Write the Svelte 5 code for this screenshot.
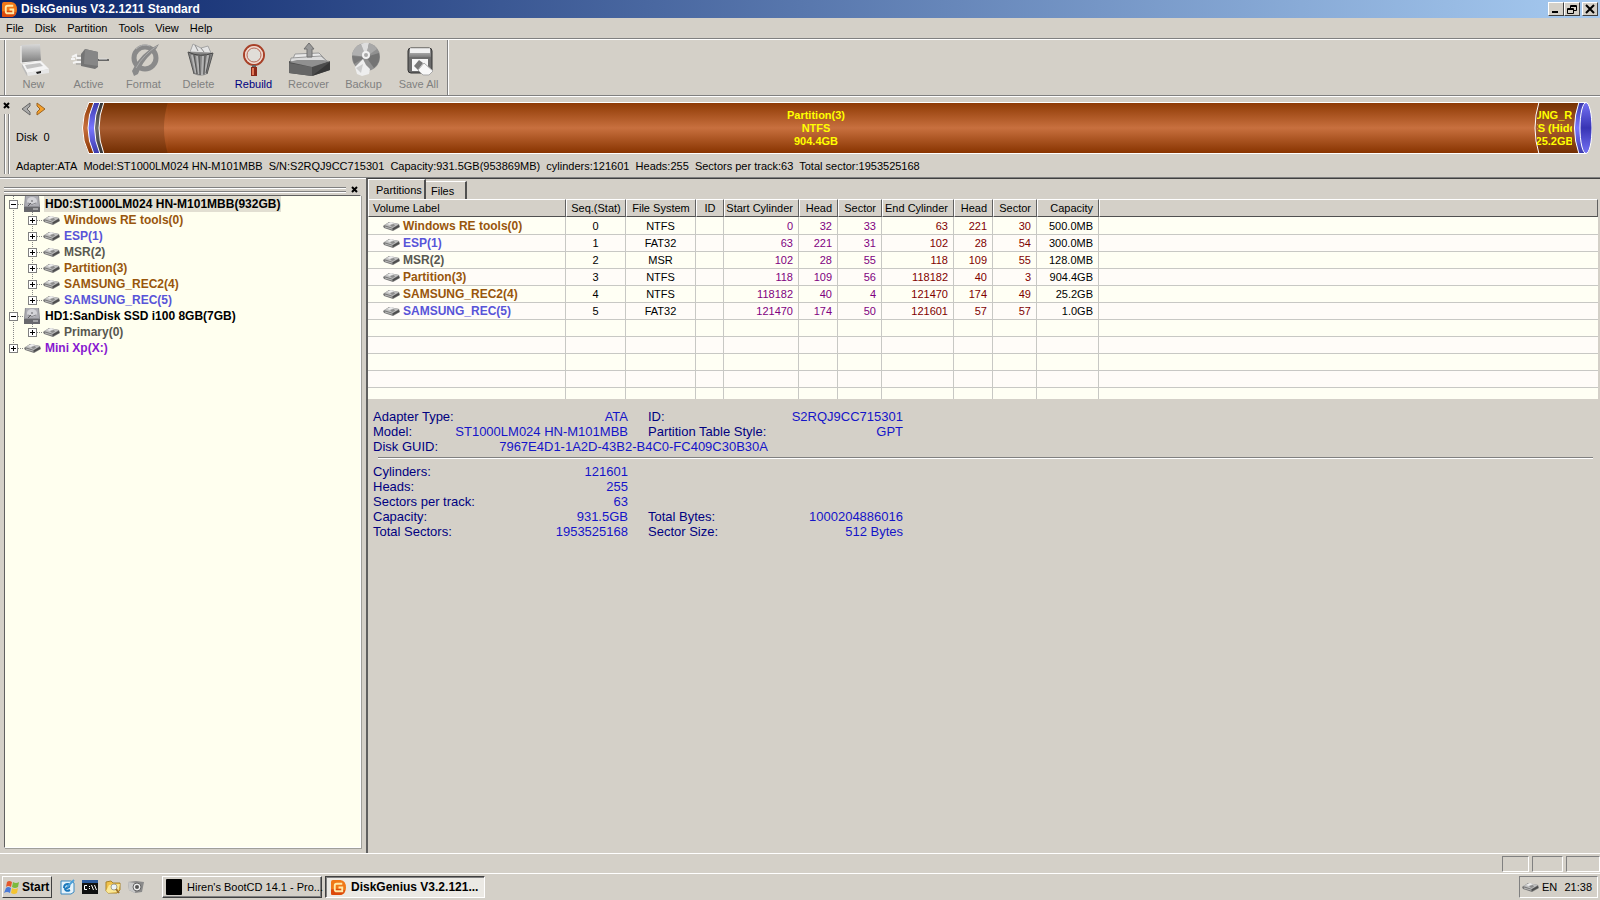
<script lang="ts">
  const menu = ['File', 'Disk', 'Partition', 'Tools', 'View', 'Help'];

  const tools = [
    { id: 'new', label: 'New' },
    { id: 'active', label: 'Active' },
    { id: 'format', label: 'Format' },
    { id: 'delete', label: 'Delete' },
    { id: 'rebuild', label: 'Rebuild' },
    { id: 'recover', label: 'Recover' },
    { id: 'backup', label: 'Backup' },
    { id: 'save', label: 'Save All' }
  ];

  const tree = [
    {
      name: 'HD0:ST1000LM024 HN-M101MBB(932GB)',
      kind: 'black',
      selected: true,
      children: [
        { name: 'Windows RE tools(0)', kind: 'ntfs' },
        { name: 'ESP(1)', kind: 'fat' },
        { name: 'MSR(2)', kind: 'msr' },
        { name: 'Partition(3)', kind: 'ntfs' },
        { name: 'SAMSUNG_REC2(4)', kind: 'ntfs' },
        { name: 'SAMSUNG_REC(5)', kind: 'fat' }
      ]
    },
    { name: 'HD1:SanDisk SSD i100 8GB(7GB)', kind: 'black', children: [{ name: 'Primary(0)', kind: 'msr' }] },
    { name: 'Mini Xp(X:)', kind: 'xp', children: [] }
  ];

  const headers = ['Volume Label', 'Seq.(Stat)', 'File System', 'ID', 'Start Cylinder', 'Head', 'Sector', 'End Cylinder', 'Head', 'Sector', 'Capacity'];

  const rows = [
    { kind: 'ntfs', cells: ['Windows RE tools(0)', '0', 'NTFS', '', '0', '32', '33', '63', '221', '30', '500.0MB'] },
    { kind: 'fat', cells: ['ESP(1)', '1', 'FAT32', '', '63', '221', '31', '102', '28', '54', '300.0MB'] },
    { kind: 'msr', cells: ['MSR(2)', '2', 'MSR', '', '102', '28', '55', '118', '109', '55', '128.0MB'] },
    { kind: 'ntfs', cells: ['Partition(3)', '3', 'NTFS', '', '118', '109', '56', '118182', '40', '3', '904.4GB'] },
    { kind: 'ntfs', cells: ['SAMSUNG_REC2(4)', '4', 'NTFS', '', '118182', '40', '4', '121470', '174', '49', '25.2GB'] },
    { kind: 'fat', cells: ['SAMSUNG_REC(5)', '5', 'FAT32', '', '121470', '174', '50', '121601', '57', '57', '1.0GB'] }
  ];

  const cellClass = (i: number) => (i === 0 ? 'label' : i < 4 ? 'mid' : i < 7 ? 'from' : i < 10 ? 'to' : 'cap');

  const idInfo = [
    [['Adapter Type:', 'ATA'], ['ID:', 'S2RQJ9CC715301']],
    [['Model:', 'ST1000LM024 HN-M101MBB'], ['Partition Table Style:', 'GPT']],
    [['Disk GUID:', '7967E4D1-1A2D-43B2-B4C0-FC409C30B30A']]
  ];

  const sizeInfo = [
    [['Cylinders:', '121601']],
    [['Heads:', '255']],
    [['Sectors per track:', '63']],
    [['Capacity:', '931.5GB'], ['Total Bytes:', '1000204886016']],
    [['Total Sectors:', '1953525168'], ['Sector Size:', '512 Bytes']]
  ];
</script>

{#snippet volume()}
  <svg class="vol" width="17" height="10" viewBox="0 0 17 10">
    <path d="M0 5 6 1 16 3 17 6 10 10 1 7Z" fill="#777" />
    <path d="M1 4 7 1 16 3 10 7Z" fill="#c0c0c0" />
    <path d="M4 3 8 1 11 2 7 4Z" fill="#eee" />
    <path d="M7 4 11 3 12 5 9 6Z" fill="#8c8c8c" />
    <path d="M10 7 16 4 16 6 10 9Z" fill="#4c4c4c" />
    <path d="M2 6 9 8" stroke="#bbb" />
  </svg>
{/snippet}

{#snippet drive()}
  <svg class="drive" width="16" height="16" viewBox="0 0 16 16">
    <path d="M1 0H15L16 10V16H0V10Z" fill="#8f8f94" />
    <path d="M2 0H14L15 10H1Z" fill="#acacb2" />
    <ellipse cx="8" cy="5" rx="5" ry="4" fill="#d4d4d8" />
    <path d="M4 7Q8 10 12 7" fill="none" stroke="#84848a" />
    <circle cx="8" cy="5" r="1" fill="#88888c" />
    <path d="M4 10 7 7" stroke="#5c5c60" />
    <path d="M0 11H16V16H0Z" fill="#68686c" />
    <path d="M9 13H14" stroke="#ddd" />
  </svg>
{/snippet}

{#snippet logo(size: number)}
  <svg width={size} height={size} viewBox="0 0 16 16">
    <path d="M2 0H10Q16 1 16 8T10 16H2Q0 16 0 14V2Q0 0 2 0Z" fill="#f07818" />
    <path d="M0 10Q8 8 15 11Q14 16 9 16H2Q0 16 0 14Z" fill="#dd4a0c" />
    <path d="M12 4H6Q4 4 4 6V10Q4 12 6 12H12V8H8" fill="none" stroke="#ffe9a8" stroke-width="2" />
  </svg>
{/snippet}

<div class="app">
  <header class="title">
    {@render logo(15)}
    <h1>DiskGenius V3.2.1211 Standard</h1>
    <div class="winbtns">
      <button aria-label="Minimize"><svg width="12" height="10"><path d="M2 8H8" stroke="#000" stroke-width="2" /></svg></button>
      <button aria-label="Restore">
        <svg width="12" height="10"><path d="M4.5 4V1.5H10.5V6.5H8M4 2.5H10M1.5 4.5H7.5V9.5H1.5ZM1 5.5H7" fill="none" stroke="#000" /></svg>
      </button>
      <button class="close" aria-label="Close"><svg width="12" height="10"><path d="M2 1 10 9M10 1 2 9" stroke="#000" stroke-width="2" /></svg></button>
    </div>
  </header>

  <nav class="menu">
    {#each menu as item}
      <button>{item}</button>
    {/each}
  </nav>

  <div class="toolbar">
    <div class="band">
      {#each tools as t}
        <button class:on={t.id === 'rebuild'}>
          <svg width="44" height="34" viewBox="0 0 44 34">
            {#if t.id === 'new'}
              <path d="M9 3 28 2 29 19 10 21Z" fill="url(#shade)" />
              <path d="M9 4V21L29 19" fill="none" stroke="#f2f2f2" />
              <path d="M10 22 29 19 37 27 15 31Z" fill="#f4f4f4" />
              <path d="M13 23 28 21 31 24 15 27Z" fill="#c2c2c2" />
              <path d="M10 22 15 31V34L10 25Z" fill="#bbb" />
              <path d="M15 31 37 27V31L16 34Z" fill="#e6e6e6" />
              <path d="M24 30 29 29V31L25 32Z" fill="#222" />
            {:else if t.id === 'active'}
              <path d="M5 15 9 13 10 16 16 16M6 21 9 20 16 20M4 17H8" fill="none" stroke="#f4f4f4" stroke-width="2" />
              <path d="M10 14H16M10 18H16M9 22H16" stroke="#999" />
              <path d="M31 18H42" stroke="#666" stroke-width="2" />
              <path d="M32 17H40" stroke="#ddd" />
              <path d="M14 12 18 7 31 10V25L28 27 14 24Z" fill="#747474" />
              <path d="M18 7 31 10V24L17 22Z" fill="#868686" />
            {:else if t.id === 'format'}
              <circle cx="23" cy="16" r="11" fill="none" stroke="#8a8a8a" stroke-width="5" />
              <path d="M14 7Q20 1 28 4" fill="none" stroke="#b4b4b4" />
              <path d="M37 2Q35 7 30 11 20 20 16 32L12 34 10 29Q18 11 37 2Z" fill="#8a8a8a" />
              <path d="M35 4Q22 12 14 26" fill="none" stroke="#aaa" />
            {:else if t.id === 'delete'}
              <path d="M13 10 16 2 24 6 31 4 34 11Z" fill="#e4e4e4" stroke="#a4a4a4" />
              <path d="M18 3 21 9M24 6 27 10" stroke="#888" />
              <path d="M11 10 36 11 30 32Q24 35 17 32Z" fill="#848484" />
              <path d="M15 13 19 31M20 14 22 32M26 14 25 33M31 13 28 32" stroke="#b4b4b4" stroke-width="2" />
              <path d="M17 13 20 32M22 14 23 33M28 14 27 32M33 13 29 31" stroke="#555" />
              <path d="M11 10Q23 16 36 11" fill="none" stroke="#444" />
              <path d="M11 10 17 32M36 11 30 32" stroke="#555" />
            {:else if t.id === 'rebuild'}
              <circle cx="22" cy="13" r="10" fill="#e0ddd8" stroke="#a84028" stroke-width="2" />
              <circle cx="22" cy="13" r="8" fill="none" stroke="#f0d6cc" stroke-width="2" />
              <circle cx="22" cy="13" r="7" fill="none" stroke="#b86a58" />
              <path d="M19 25H25V34H19Z" fill="#8a2818" />
              <path d="M21 26V33" stroke="#e07858" stroke-width="2" />
              <path d="M20 24H24" stroke="#666" stroke-width="2" />
            {:else if t.id === 'recover'}
              <path d="M8 12 32 11 40 19 5 19Z" fill="#e8e8e8" stroke="#999" />
              <path d="M4 16 34 14 41 20 3 21Z" fill="#dcdcdc" stroke="#999" />
              <path d="M2 19 24 24 43 19V28L25 34 2 31Z" fill="#4c4c4c" />
              <path d="M2 21 25 25V34L2 31Z" fill="#666" />
              <path d="M2 20 10 18H36L43 19 25 25Z" fill="#909090" />
              <path d="M25 34 43 20V28Z" fill="#383838" />
              <path d="M20 15V7H17L22 1 27 7H25V15Z" fill="#999" stroke="#707070" />
            {:else if t.id === 'backup'}
              <circle cx="24" cy="15" r="14" fill="#909090" />
              <path d="M24 15 10 13A14 14 0 0 1 19 2Z" fill="#b0b0b0" />
              <path d="M24 15 19 2A14 14 0 0 1 27 1Z" fill="#dedede" />
              <path d="M24 15 27 1A14 14 0 0 1 35 7Z" fill="#a8a8a8" />
              <path d="M24 15 37 11A14 14 0 0 1 32 26Z" fill="#747474" />
              <path d="M24 15 12 22 10 14Z" fill="#787878" />
              <circle cx="24" cy="13" r="4" fill="#f2f2f2" />
              <circle cx="24" cy="13" r="2" fill="#aaa" />
              <path d="M21 17 13 25 15 32 20 34 27 32 28 27 24 23Z" fill="#eee" />
              <path d="M14 26 21 22 19 31Z" fill="#ccc" />
            {:else}
              <rect x="11" y="6" width="24" height="25" rx="3" fill="#6c6c6c" stroke="#333" />
              <path d="M13 6H33L34 15H12Z" fill="url(#shade)" />
              <path d="M13 7H33V11H13Z" fill="#f0f0f0" />
              <path d="M15 17H31V29H15Z" fill="#f6f6f6" />
              <path d="M17 24 22 18 26 21 21 28Z" fill="#777" />
              <path d="M21 28 27 21 36 29 32 33H26Z" fill="#f8f8f8" stroke="#aaa" />
            {/if}
          </svg>
          <span>{t.label}</span>
        </button>
      {/each}
    </div>
  </div>

  <section class="disk">
    <div class="side">
      <button class="x" aria-label="Close disk bar"><svg width="7" height="7"><path d="M1 1 6 6M6 1 1 6" stroke="#000" stroke-width="2" /></svg></button>
      <div class="vgrip"></div>
    </div>
    <div class="diskmain">
      <div class="diskrow">
        <div class="pick">
          <div class="arrows">
            <button aria-label="Previous disk">
              <svg width="10" height="14"><path d="M9 1V4L6 7 9 10V13L1 7Z" fill="#aaa" stroke="#666" /></svg>
            </button>
            <button aria-label="Next disk">
              <svg width="10" height="14"><path d="M1 1 9 7 1 13V10L4 7 1 4Z" fill="#f5a02c" stroke="#9a6424" /></svg>
            </button>
          </div>
          <span>Disk&nbsp; 0</span>
        </div>
        <div class="cyl">
          <svg width="86" height="52" viewBox="0 0 86 52">
            <path d="M7 0H86V52H7Q-6 26 7 0Z" fill="url(#brown)" />
            <path d="M12 0H22V52H12Q0 26 12 0Z" fill="url(#blue)" />
            <path d="M18 0H26V52H18Q7 26 18 0Z" fill="url(#grey)" />
            <path d="M22 0H86Q78 26 86 52H22Q12 26 22 0Z" fill="url(#used)" />
            <path d="M7 0Q-6 26 7 52M12 0Q0 26 12 52M18 0Q7 26 18 52M22 0Q12 26 22 52M7 0.5H86M7 51.5H86" fill="none" stroke="#fff" />
          </svg>
          <div class="part">
            <span>Partition(3)</span>
            <span>NTFS</span>
            <span>904.4GB</span>
          </div>
          <div class="tail">
            <svg width="58" height="52" viewBox="0 0 58 52">
              <path d="M0 0H46V52H0Z" fill="url(#brown)" />
              <path d="M5 0H46V52H5Q-3 26 5 0Z" fill="url(#used)" />
              <path d="M45 0H52V52H45Q36 26 45 0Z" fill="url(#blue)" />
              <ellipse cx="52" cy="26" rx="6" ry="25.5" fill="url(#cap)" stroke="#fff" />
              <path d="M5 0Q-3 26 5 52M45 0Q36 26 45 52M0 0.5H52M0 51.5H52" fill="none" stroke="#fff" />
            </svg>
            <div class="tailtext">
              <span>SAMSUNG_REC2(4)</span>
              <span>NTFS (Hidden)</span>
              <span>25.2GB</span>
            </div>
          </div>
        </div>
      </div>
      <p>Adapter:ATA&nbsp; Model:ST1000LM024 HN-M101MBB&nbsp; S/N:S2RQJ9CC715301&nbsp; Capacity:931.5GB(953869MB)&nbsp; cylinders:121601&nbsp; Heads:255&nbsp; Sectors per track:63&nbsp; Total sector:1953525168</p>
    </div>
  </section>

  <main>
    <aside>
      <div class="gripbar">
        <div class="hgrip"></div>
        <button class="x" aria-label="Close tree"><svg width="7" height="7"><path d="M1 1 6 6M6 1 1 6" stroke="#000" stroke-width="2" /></svg></button>
      </div>
      <ul class="tree">
        {#each tree as node}
          <li>
            <div class="node">
              <button class="exp" aria-label="Toggle {node.name}">
                <svg width="9" height="9"><path d={node.children.length ? 'M2 4.5H7' : 'M2 4.5H7M4.5 2V7'} stroke="#000" /></svg>
              </button>
              <i class="dots"></i>
              {#if node.children.length}{@render drive()}{:else}{@render volume()}{/if}
              <span class={node.kind} class:selected={node.selected}>{node.name}</span>
            </div>
            {#if node.children.length}
              <ul>
                {#each node.children as child}
                  <li class="node">
                    <button class="exp" aria-label="Toggle {child.name}">
                      <svg width="9" height="9"><path d="M2 4.5H7M4.5 2V7" stroke="#000" /></svg>
                    </button>
                    <i class="dots"></i>
                    {@render volume()}
                    <span class={child.kind}>{child.name}</span>
                  </li>
                {/each}
              </ul>
            {/if}
          </li>
        {/each}
      </ul>
    </aside>

    <section class="pane">
      <div class="tabs">
        <button class="tab active">Partitions</button>
        <button class="tab">Files</button>
      </div>
      <div class="grid">
        <table>
          <colgroup>
            <col class="w198" /><col class="w60" /><col class="w70" /><col class="w28" /><col class="w75" /><col class="w39" />
            <col class="w44" /><col class="w72" /><col class="w39" /><col class="w44" /><col class="w62" /><col />
          </colgroup>
          <thead>
            <tr>
              {#each headers as h, i}
                <th class={cellClass(i)}>{h}</th>
              {/each}
              <th></th>
            </tr>
          </thead>
          <tbody>
            {#each rows as row}
              <tr>
                {#each row.cells as cell, i}
                  {#if i === 0}
                    <td class="label"><div class="name">{@render volume()}<span class={row.kind}>{cell}</span></div></td>
                  {:else}
                    <td class={cellClass(i)}>{cell}</td>
                  {/if}
                {/each}
                <td></td>
              </tr>
            {/each}
            {#each Array(5) as _}
              <tr>
                {#each Array(12) as _}<td></td>{/each}
              </tr>
            {/each}
          </tbody>
        </table>
      </div>

      <div class="info">
        {#each idInfo as line}
          <dl>
            {#each line as [k, v]}
              <div class="pair" class:wide={k === 'Disk GUID:'}><dt>{k}</dt><dd>{v}</dd></div>
            {/each}
          </dl>
        {/each}
        <hr />
        {#each sizeInfo as line}
          <dl>
            {#each line as [k, v]}
              <div class="pair"><dt>{k}</dt><dd>{v}</dd></div>
            {/each}
          </dl>
        {/each}
      </div>
    </section>
  </main>

  <div class="status"><i class="s27"></i><i class="s31"></i><i class="s34"></i></div>

  <footer>
    <button class="startbtn">
      <svg width="16" height="16" viewBox="0 0 16 16">
        <path d="M3 3Q5 1 8 3L7 8Q4 6 2 8Z" fill="#e4582c" />
        <path d="M9 3Q12 5 15 3L14 8Q11 10 8 8Z" fill="#7cba3c" />
        <path d="M2 9Q4 7 7 9L6 14Q3 12 0 14Z" fill="#4a7ad8" />
        <path d="M8 9Q11 11 14 9L13 14Q10 16 7 14Z" fill="#f4c430" />
      </svg>
      Start
    </button>
    <div class="quick">
      <button aria-label="Show desktop">
        <svg width="16" height="16" viewBox="0 0 16 16">
          <path d="M2 2H12L15 4V13L12 15H2Z" fill="#e6f3fb" stroke="#3a88c0" />
          <path d="M5 9Q5 5 9 5Q11 6 10 8L6 10Q7 13 11 11" fill="none" stroke="#1b78bb" stroke-width="2" />
          <path d="M8 8 15 1" stroke="#4ca0d8" stroke-width="2" />
        </svg>
      </button>
      <button aria-label="Command prompt">
        <svg width="16" height="14" viewBox="0 0 16 14">
          <path d="M0 0H16V14H0Z" fill="#111" /><path d="M0 0H16V3H0Z" fill="#2c5a9c" />
          <path d="M5 5.5H2.5V9.5H5M7.5 6V7M7.5 8V9M9.5 5 11.5 10M12.5 5 14.5 10" fill="none" stroke="#fff" />
        </svg>
      </button>
      <button aria-label="Explorer">
        <svg width="16" height="16" viewBox="0 0 16 16">
          <path d="M1 3 6 2 8 4H15V11L12 14H3L1 12Z" fill="#f0c048" stroke="#a8842c" />
          <path d="M1 12 4 6 15 5 13 13 3 14Z" fill="#fbe896" />
          <circle cx="9" cy="8" r="3" fill="#eef4f8" stroke="#a0a090" />
          <path d="M11 10 14 14" stroke="#a0742c" stroke-width="2" />
        </svg>
      </button>
      <button aria-label="Screenshot">
        <svg width="16" height="16" viewBox="0 0 16 16">
          <path d="M0 3 8 2 16 3 14 13 7 14 1 11Z" fill="#8a8a8a" />
          <path d="M0 3 8 4 7 14 1 11Z" fill="#c8c8c8" />
          <circle cx="9" cy="8" r="4" fill="#eee" stroke="#666" />
          <circle cx="9" cy="8" r="2" fill="#555" />
        </svg>
      </button>
    </div>
    <button class="task">
      <svg width="16" height="16"><rect width="16" height="16" rx="1" fill="#000" /></svg>
      <span>Hiren's BootCD 14.1 - Pro...</span>
    </button>
    <button class="task current">
      {@render logo(15)}
      <span>DiskGenius V3.2.121...</span>
    </button>
    <div class="tray">
      {@render volume()}
      <span>EN</span>
      <time>21:38</time>
    </div>
  </footer>

  <svg class="defs" width="0" height="0">
    <defs>
      <linearGradient id="shade" x1="0" y1="0" x2="0" y2="1"><stop offset="0" stop-color="#d8d8d8" /><stop offset="1" stop-color="#7c7c7c" /></linearGradient>
      <linearGradient id="brown" x1="0" y1="0" x2="0" y2="1"><stop offset="0" stop-color="#8e3a04" /><stop offset=".5" stop-color="#c8703f" /><stop offset="1" stop-color="#883400" /></linearGradient>
      <linearGradient id="used" x1="0" y1="0" x2="0" y2="1"><stop offset="0" stop-color="#743000" /><stop offset=".5" stop-color="#a85c30" /><stop offset="1" stop-color="#702c00" /></linearGradient>
      <linearGradient id="blue" x1="0" y1="0" x2="0" y2="1"><stop offset="0" stop-color="#3a38a8" /><stop offset=".5" stop-color="#7876ff" /><stop offset="1" stop-color="#3a38a8" /></linearGradient>
      <linearGradient id="cap" x1="0" y1="0" x2="0" y2="1"><stop offset="0" stop-color="#7472f4" /><stop offset=".5" stop-color="#3834b4" /><stop offset="1" stop-color="#7472f4" /></linearGradient>
      <linearGradient id="grey" x1="0" y1="0" x2="0" y2="1"><stop offset="0" stop-color="#333" /><stop offset=".5" stop-color="#6c6c6c" /><stop offset="1" stop-color="#333" /></linearGradient>
    </defs>
  </svg>
</div>

<style>
  :global(body) { margin: 0; }
  .app { display: flex; flex-direction: column; min-height: 100vh; background: #d4d0c8; color: #000; font: 11px/16px "Liberation Sans", Arial, sans-serif; }
  .app * { box-sizing: border-box; }
  svg { display: block; flex: none; }
  .defs { position: absolute; }
  button { font: inherit; color: inherit; background: none; border: 0; padding: 0; margin: 0; }
  ul, dl, dd, p, h1 { margin: 0; padding: 0; list-style: none; }
  span, p, button, dt, dd { white-space: nowrap; }

  .title { display: flex; align-items: center; gap: 4px; height: 18px; padding: 0 2px; background: linear-gradient(90deg, #0a246a, #a6caf0); color: #fff; }
  .title h1 { flex: 1; font-size: 12px; line-height: 16px; }
  .winbtns { display: flex; }
  .winbtns button { display: flex; align-items: center; justify-content: center; width: 16px; height: 14px; background: #d4d0c8; border: 1px solid; border-color: #fff #404040 #404040 #fff; }
  .winbtns .close { margin-left: 2px; }

  .menu { display: flex; gap: 11px; height: 21px; padding: 0 6px; align-items: center; border-bottom: 1px solid #808080; }

  .toolbar { height: 57px; padding-left: 4px; border-top: 1px solid #fff; border-bottom: 1px solid #808080; }
  .band { display: flex; width: max-content; height: 55px; padding: 2px 1px 0; border-left: 1px solid #808080; border-right: 1px solid #808080; box-shadow: 1px 0 #fff, inset 1px 0 #fff; }
  .band button { display: flex; flex-direction: column; align-items: center; width: 55px; color: #808080; }
  .band .on { color: #000080; }

  .disk { display: flex; gap: 6px; height: 82px; padding: 5px 8px 0 3px; border-top: 1px solid #fff; border-bottom: 1px solid #808080; }
  .side { display: flex; flex-direction: column; gap: 5px; width: 7px; align-items: center; }
  .x { width: 7px; height: 7px; }
  .vgrip { width: 5px; height: 60px; border: solid #808080; border-width: 0 1px; box-shadow: inset 1px 0 #fff, 1px 0 #fff; }
  .diskmain { flex: 1; min-width: 0; }
  .diskrow { display: flex; }
  .pick { width: 66px; }
  .arrows { display: flex; align-items: flex-start; gap: 5px; height: 27px; padding-left: 5px; }
  .cyl { display: flex; flex: 1; min-width: 0; height: 52px; font-weight: bold; color: #ff0; line-height: 13px; }
  .part { flex: 1; display: flex; flex-direction: column; align-items: center; padding: 6px 70px 0 0; background: linear-gradient(#8e3a04, #c8703f 50%, #883400); border: solid #fff; border-width: 1px 0; }
  .tail { display: grid; width: 58px; }
  .tail > * { grid-area: 1 / 1; }
  .tailtext { display: flex; flex-direction: column; align-items: center; width: 35px; margin-left: 3px; padding-top: 7px; overflow: hidden; }
  .diskmain p { padding-top: 4px; }

  main { display: flex; flex: 1; }
  aside { display: flex; flex-direction: column; width: 366px; padding: 5px 5px 5px 4px; border-top: 1px solid #fff; }
  .gripbar { display: flex; align-items: center; gap: 5px; height: 11px; padding-right: 3px; }
  .hgrip { flex: 1; height: 5px; border: solid #808080; border-width: 1px 0; box-shadow: inset 0 1px #fff, 0 1px #fff; }
  .tree { flex: 1; background: #ffffef; border: 1px solid; border-color: #606060 #fff #fff #606060; box-shadow: 1px 1px #a0a09a; font-size: 12px; font-weight: bold; padding-left: 4px; }
  .tree ul { padding-left: 19px; }
  .node { display: flex; align-items: center; height: 16px; }
  .tree > li { background: repeating-linear-gradient(#888 0 1px, transparent 1px 2px) 4px 0 / 1px 100% no-repeat; }
  .tree > li:last-child { background-size: 1px 8px; }
  .tree ul .node { background: repeating-linear-gradient(#888 0 1px, transparent 1px 2px) 4px 0 / 1px 100% no-repeat; }
  .tree ul .node:last-child { background-size: 1px 8px; }
  .exp { width: 9px; height: 9px; border: 1px solid #808080; background: #fff; }
  .exp svg { margin: -1px; }
  .dots { width: 6px; height: 1px; background: repeating-linear-gradient(90deg, #888 0 1px, transparent 1px 2px); }
  .node span { margin-left: 3px; padding: 0 1px; }
  .drive + span { margin-left: 4px; }
  .selected { background: #e2dfd2; }
  .black { color: #000; }
  .ntfs { color: #98560c; }
  .fat { color: #5854d8; }
  .msr { color: #585850; }
  .xp { color: #8818d0; }

  .pane { flex: 1; min-width: 0; padding-right: 2px; border-left: 2px solid #606060; border-top: 1px solid #404040; }
  .tabs { display: flex; align-items: flex-end; height: 20px; }
  .tab { height: 18px; width: 41px; padding: 0 5px; text-align: left; border-right: 2px solid #505050; border-top: 1px solid #fff; }
  .tab.active { height: 20px; width: 58px; padding: 0 5px 0 7px; border-left: 1px solid #fff; }
  .grid { height: 200px; overflow: hidden; background: #fffff4; }
  table { width: 100%; table-layout: fixed; border-collapse: separate; border-spacing: 0; }
  .w198 { width: 198px; } .w75 { width: 75px; } .w72 { width: 72px; } .w70 { width: 70px; } .w62 { width: 62px; } .w60 { width: 60px; }
  .w44 { width: 44px; } .w39 { width: 39px; } .w28 { width: 28px; }
  th, td { padding: 0 5px 0 0; white-space: nowrap; text-align: right; }
  th { height: 18px; line-height: 15px; font-weight: normal; background: #d4d0c8; border: 1px solid; border-color: #fff #606060 #505050 #fff; }
  td { height: 17px; line-height: 16px; border-right: 1px solid #c8c8c4; border-bottom: 1px solid #c8c8c4; }
  tbody tr:first-child td { height: 18px; }
  tr:nth-child(even) td { background: #fffcf8; }
  td:last-child { border-right: 0; }
  .label { text-align: left; }
  th.label { padding-left: 4px; }
  .mid { text-align: center; padding: 0; }
  td.from { color: #800080; }
  td.to { color: #800000; }
  .name { display: flex; align-items: center; gap: 3px; padding-left: 15px; font-size: 12px; font-weight: bold; }

  .info { padding: 10px 5px 0 5px; font-size: 13px; line-height: 15px; color: #000080; }
  .info dl { display: flex; gap: 20px; }
  .pair { display: flex; justify-content: space-between; width: 255px; }
  .wide { width: 395px; }
  .info dd { color: #1414c8; }
  .info hr { height: 2px; margin: 3px 0 5px 5px; border: 0; border-top: 1px solid #808080; border-bottom: 1px solid #fff; }

  .status { display: flex; justify-content: flex-end; gap: 3px; height: 20px; padding: 2px 0; border-top: 1px solid #fff; }
  .status i { height: 16px; border: 1px solid; border-color: #808080 #fff #fff #808080; }
  .s27 { width: 27px; } .s31 { width: 31px; } .s34 { width: 34px; }

  footer { display: flex; align-items: center; height: 27px; padding: 0 2px; border-top: 1px solid #fff; }
  .startbtn { display: flex; align-items: center; gap: 2px; width: 50px; height: 22px; padding-left: 1px; font-size: 12px; font-weight: bold; border: 1px solid; border-color: #fff #404040 #404040 #fff; }
  .quick { display: flex; align-items: center; gap: 7px; padding: 0 18px 0 7px; }
  .task { display: flex; align-items: center; gap: 5px; width: 160px; height: 22px; padding-left: 3px; border: 1px solid; border-color: #fff #404040 #404040 #fff; box-shadow: inset -1px -1px #808080; }
  .current { margin-left: 3px; padding-left: 5px; font-size: 12px; font-weight: bold; background: #ebe9e4; border-color: #404040 #fff #fff #404040; box-shadow: inset 1px 1px #808080; }
  .tray { display: flex; align-items: center; gap: 3px; height: 22px; width: 79px; margin-left: auto; padding: 0 2px; border: 1px solid; border-color: #808080 #fff #fff #808080; }
  .tray time { margin-left: auto; padding-right: 3px; }
</style>
